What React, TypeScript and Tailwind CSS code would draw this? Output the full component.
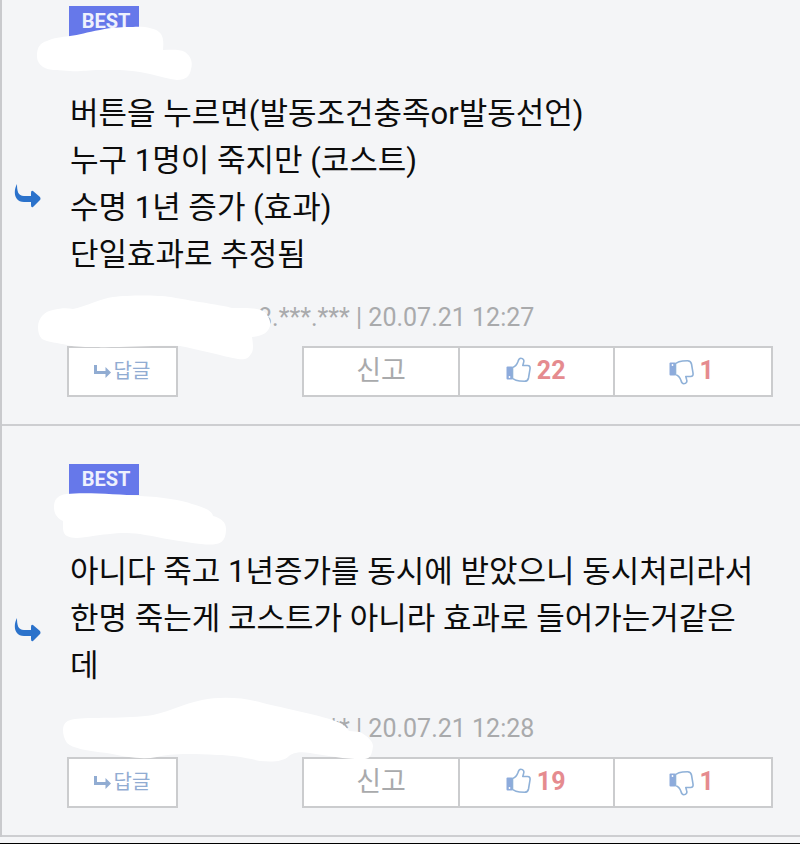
import React from "react";

type Comment = {
  id: number;
  lines: string[];
  writer: string;
  address: string;
  date: string;
  up: number;
  down: number;
  nameMask: string;
  writerMask: string;
};

const comments: Comment[] = [
  {
    id: 1,
    lines: [
      "버튼을 누르면(발동조건충족or발동선언)",
      "누구 1명이 죽지만 (코스트)",
      "수명 1년 증가 (효과)",
      "단일효과로 추정됨",
    ],
    writer: "ㅇ",
    address: "8.***.***",
    date: "20.07.21 12:27",
    up: 22,
    down: 1,
    nameMask:
      "M-30 50C-30 41-27 37-20 35C-14 32-5 31 3 30C12 29 20 26 33 24C45 21 58 21 66 21C76 20 88 22 92 26C96 29 97 35 96 44C104 44 112 43 118 46C124 50 126 57 124 63C123 70 119 74 110 74C102 73 92 70 83 68C65 63 40 64 33 64C20 64 12 66 3 65C-6 64-18 65-24 61C-28 58-30 55-30 50Z",
    writerMask:
      "M-29 24C-29 15-22 8-14 7C-6 5 0 5 6 6C20 3 35-5 46-6C62-8 90-8 104-6C130-1 155 2 165 5C175 5 190 4 196 8C202 12 204 19 203 23C201 30 195 33 185 34C186 41 187 47 184 51C181 56 177 57 171 56C155 53 130 46 113 43C90 42 45 45 30 44C20 44 8 44 0 42C-8 40-20 39-25 36C-28 33-29 29-29 24Z",
  },
  {
    id: 2,
    lines: [
      "아니다 죽고 1년증가를 동시에 받았으니 동시처리라서 한명 죽는게 코스트가 아니라 효과로 들어가는거같은데",
    ],
    writer: "ㅇ",
    address: "8.***.***",
    date: "20.07.21 12:28",
    up: 19,
    down: 1,
    nameMask:
      "M-13 43C-13 36-10 31 0 30C15 28 50 30 73 32C95 33 115 36 125 40C135 43 145 46 146 52C154 54 159 58 159 65C159 74 156 79 149 80C140 82 120 78 100 75C85 72 70 69 60 69C45 69 35 71 26 72C15 74 5 75 0 72C-5 69-4 62-4 57C-10 54-13 50-13 43Z",
    writerMask:
      "M-4 16C-4 9 0 6 8 5C20 3 60 5 86 1C105-3 115-10 135-14C155-18 180-16 196-11C215-6 255 1 273 9C277 11 280 14 282 17L293 18C300 22 306 27 306 32C305 40 304 44 298 45C285 46 260 42 243 39C233 37 225 39 222 42C216 48 205 48 193 47C180 44 165 41 150 41C120 39 100 40 90 43C75 46 60 43 40 39C20 37 5 34 0 29C-3 25-4 20-4 16Z",
  },
];

function App() {
  return (
    <main className="flex flex-col overflow-hidden border-b border-black bg-[#f4f5f7] pb-1.5 font-[Roboto,'Noto_Sans_CJK_KR',sans-serif]">
      <div className="-mt-8 flex flex-col border-l-2 border-[#c9cacd]">
        {comments.map((comment) => (
          <CommentItem key={comment.id} comment={comment} />
        ))}
      </div>
    </main>
  );
}

const CommentItem = ({ comment }: { comment: Comment }) => {
  return (
    <article className="flex items-center border-b-2 border-[#cdced1] pt-[38px] pr-[27px] pb-[27px]">
      <div className="flex w-[65px] flex-none pb-3 pl-3">
        <ReplyArrow />
      </div>

      <div className="flex min-w-0 flex-1 flex-col">
        <div className="relative h-[84px] pl-0.5">
          <span className="flex h-[31px] w-[70px] items-center justify-center bg-[#6678ea] pb-0.5 pl-1 text-[20px] font-bold text-[#eef1fd]">
            BEST
          </span>
          <Mask d={comment.nameMask} />
        </div>

        <div className="pr-4 pl-[3px] text-[31px] leading-[47px] break-all text-[#0c0c0c]">
          {comment.lines.map((line) => (
            <p key={line}>{line}</p>
          ))}
        </div>

        <div className="relative mt-[25px] flex h-[30px] items-center pl-1 text-[25px] whitespace-pre text-[#a9aaac]">
          <span className="w-[187px]">{comment.writer}</span>
          <span>{comment.address} | </span>
          <time>{comment.date}</time>
          <Mask d={comment.writerMask} />
        </div>

        <div className="mt-[13px] flex h-[51px] justify-between">
          <button
            type="button"
            className="flex w-[111px] items-center justify-center gap-0.5 border-2 border-[#cbccce] bg-white pr-0.5 pb-0.5 text-[20px] text-[#91acd2]"
          >
            <SmallArrow />
            답글
          </button>

          <div className="grid w-2/3 grid-cols-3 divide-x-2 divide-[#cbccce] border-2 border-[#cbccce] bg-white">
            <button type="button" className="text-[27px] text-[#a9aaac]">
              신고
            </button>
            <button
              type="button"
              aria-label="추천"
              className="flex items-center justify-center gap-1.5 pr-0.5 pb-0.5 text-[25px] font-bold text-[#e58b8f]"
            >
              <Thumb />
              {comment.up}
            </button>
            <button
              type="button"
              aria-label="비추천"
              className="flex items-center justify-center gap-1.5 pr-1 pb-0.5 text-[25px] font-bold text-[#e58b8f]"
            >
              <Thumb down />
              {comment.down}
            </button>
          </div>
        </div>
      </div>
    </article>
  );
};

// white brush stroke that hides the nickname / ip
const Mask = ({ d }: { d: string }) => (
  <svg
    className="pointer-events-none absolute top-0 left-0 overflow-visible"
    width="1"
    height="1"
    aria-hidden="true"
  >
    <path d={d} fill="#fff" />
  </svg>
);

const ReplyArrow = () => (
  <svg width="27" height="26" viewBox="0 0 27 26" aria-hidden="true">
    <path
      d="M3 1C-1 8 0 19 10 19H17V22Q17 25 19 24L26 17Q27 16 26 14L19 8Q17 7 17 10V13H10C4 13 3 8 3 1Z"
      fill="#2b72cb"
    />
  </svg>
);

const SmallArrow = () => (
  <svg width="19" height="16" viewBox="0 0 19 16" aria-hidden="true">
    <path d="M2.5 2V9.5H14" fill="none" stroke="currentColor" strokeWidth="3" />
    <path d="M12.5 4L18 9.5L12.5 15Z" fill="currentColor" />
  </svg>
);

const Thumb = ({ down }: { down?: boolean }) => (
  <svg
    width="25"
    height="28"
    viewBox="0 0 25 28"
    className={down ? "-scale-y-100" : ""}
    aria-hidden="true"
  >
    <rect x="0.5" y="9.500" width="6" height="13" rx="1" fill="#8dabdc" />
    <path
      d="M6.500 21.500V10.500C9.500 9.500 11 7.500 12 4.500C12.500 2.500 13 1.300 14.800 1.300C17.500 1.300 18.300 3.500 17.600 5.500L16.800 8.500H21.500C23.800 8.500 24.300 10 24 12L22.500 21C22 23.500 21 24.300 18.500 24.300C15 24.300 12 24 10 23.300C8.500 22.800 8 22 6.500 21.500Z"
      fill="#fff"
      stroke="#8fb1d8"
      strokeWidth="1.6"
      strokeLinejoin="round"
    />
    <circle cx="3.500" cy="20" r="0.900" fill="#fff" />
  </svg>
);

export default App;
